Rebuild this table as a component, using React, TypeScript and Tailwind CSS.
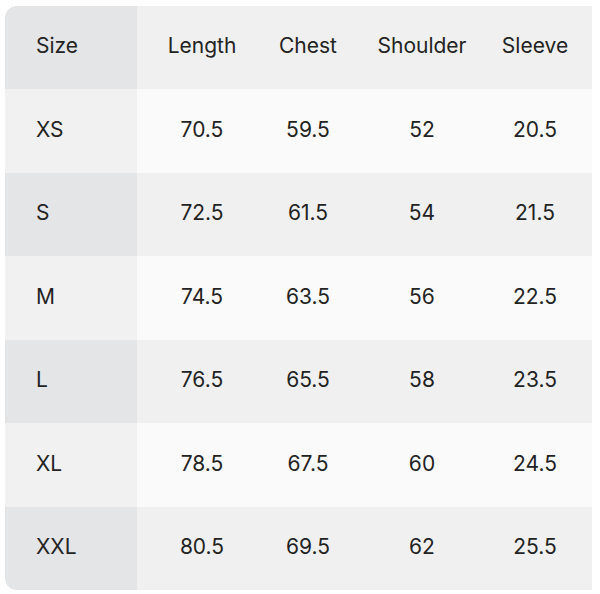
import React from "react";

const headers = ["Length", "Chest", "Shoulder", "Sleeve"];

const rows = [
  { size: "XS", values: ["70.5", "59.5", "52", "20.5"] },
  { size: "S", values: ["72.5", "61.5", "54", "21.5"] },
  { size: "M", values: ["74.5", "63.5", "56", "22.5"] },
  { size: "L", values: ["76.5", "65.5", "58", "23.5"] },
  { size: "XL", values: ["78.5", "67.5", "60", "24.5"] },
  { size: "XXL", values: ["80.5", "69.5", "62", "25.5"] },
];

const cols = "grid grid-cols-[132px_130px_82px_146px_97px] flex-1";

const Row = ({
  first,
  cells,
  shaded,
}: {
  first: string;
  cells: string[];
  shaded: boolean;
}) => (
  <div className={cols}>
    <div
      className={
        shaded
          ? "flex items-center pl-[31px] pb-[3px] bg-[#e4e5e7]"
          : "flex items-center pl-[31px] pb-[3px] bg-[#f1f1f2]"
      }
    >
      {first}
    </div>
    {cells.map((c, i) => (
      <div
        key={i}
        className={
          (shaded ? "bg-[#f0f0f0] " : "bg-[#fafafa] ") +
          (i === 3
            ? "flex items-center justify-center pb-[3px] pr-[17px]"
            : "flex items-center justify-center pb-[3px]")
        }
      >
        {c}
      </div>
    ))}
  </div>
);

export default function App() {
  return (
    <div className="w-[600px] h-[594px] bg-white pt-[6px] pl-[5px]">
      <div
        className="flex flex-col w-[587px] h-[584px] rounded-l-[12px] overflow-hidden text-[21px] text-[#232323]"
        style={{ fontFamily: "Inter, 'Liberation Sans', sans-serif" }}
      >
        <Row first="Size" cells={headers} shaded={true} />
        {rows.map((r, i) => (
          <Row key={r.size} first={r.size} cells={r.values} shaded={i % 2 === 1} />
        ))}
      </div>
    </div>
  );
}
